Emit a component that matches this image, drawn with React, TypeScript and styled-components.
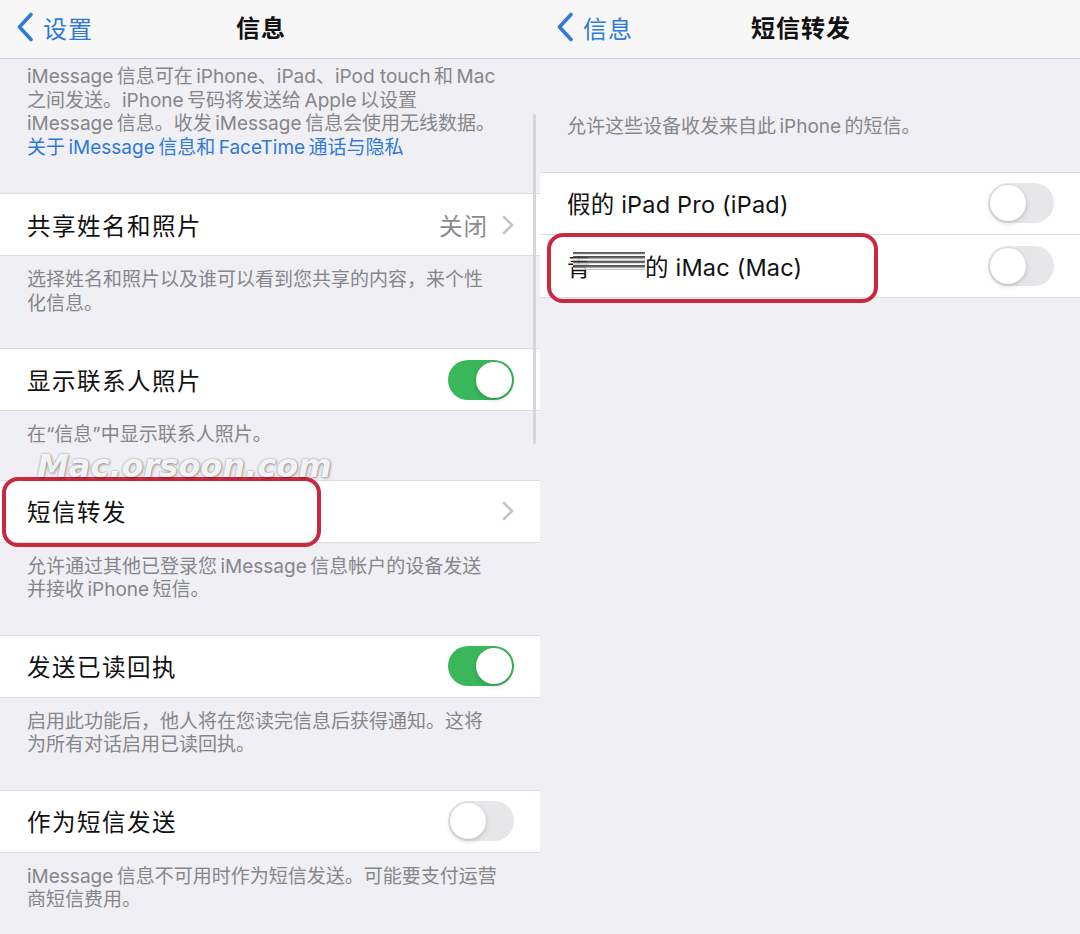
import React from "react";
import styled, { createGlobalStyle } from "styled-components";

const Global = createGlobalStyle`
  html, body { margin: 0; padding: 0; background: #efeff4; }
  body { font-family: "Inter", "Noto Sans CJK SC", "Noto Sans", sans-serif; -webkit-font-smoothing: antialiased; }
  * { box-sizing: border-box; }
`;

const Page = styled.div`
  display: grid;
  grid-template-columns: 540px 540px;
  width: 1080px;
  height: 934px;
  overflow: hidden;
  background: #efeff4;
`;

const Panel = styled.section`
  position: relative;
  display: flex;
  flex-direction: column;
  height: 934px;
  overflow: hidden;
`;

const Nav = styled.header`
  position: relative;
  height: 59px;
  flex: none;
  display: flex;
  align-items: center;
  justify-content: center;
  padding: 0 18px 5px 0;
  background: #f7f7f8;
  border-bottom: 1px solid #cfcfd3;
`;

const Back = styled.div`
  position: absolute;
  left: 16px;
  top: 0;
  height: 54px;
  display: flex;
  align-items: center;
  gap: 9px;
  color: #2f7ad8;
  font-size: 24px;
  letter-spacing: 1px;
`;

const Title = styled.h1`
  margin: 0;
  font-size: 24px;
  font-weight: 600;
  color: #111;
  letter-spacing: 1px;
`;

const Content = styled.div`
  display: flex;
  flex-direction: column;
`;

const Footer = styled.p<{ $top?: number; $bottom?: number }>`
  margin: 0;
  padding: ${(p) => p.$top ?? 12}px 20px ${(p) => p.$bottom ?? 33}px 27px;
  font-size: 19px;
  line-height: 23.5px;
  color: #86868b;
`;

const Link = styled.span`
  color: #2f7ad8;
`;

const Group = styled.div`
  background: #fff;
  border-top: 1px solid #dcdce0;
  border-bottom: 1px solid #dcdce0;
`;

const Row = styled.div<{ $sep?: boolean }>`
  position: relative;
  height: ${(p) => (p.$sep ? 63 : 61)}px;
  display: flex;
  align-items: center;
  padding: 0 26px 0 27px;
  border-top: ${(p) => (p.$sep ? "1px solid #dcdce0" : "none")};
`;

const Label = styled.span<{ $cjk?: boolean }>`
  flex: 1;
  font-size: 23.5px;
  color: #111;
  letter-spacing: ${(p) => (p.$cjk ? "1.5px" : "0.2px")};
  display: flex;
  align-items: center;
`;

const Value = styled.span`
  font-size: 23.5px;
  color: #8a8a8e;
  letter-spacing: 1px;
  margin-right: 14px;
`;

const Track = styled.div<{ $on: boolean }>`
  position: relative;
  width: 66px;
  height: 40px;
  border-radius: 20px;
  background: ${(p) => (p.$on ? "#3ab75a" : "#e7e7ea")};
`;

const Knob = styled.div<{ $on: boolean }>`
  position: absolute;
  top: 2px;
  left: ${(p) => (p.$on ? "28px" : "2px")};
  width: 36px;
  height: 36px;
  border-radius: 50%;
  background: #fff;
  box-shadow: 0 2px 5px rgba(0, 0, 0, 0.18), 0 0 0 0.5px rgba(0, 0, 0, 0.06);
`;

const Highlight = styled.div<{ $l: number; $t: number; $w: number; $h: number }>`
  position: absolute;
  left: ${(p) => p.$l}px;
  top: ${(p) => p.$t}px;
  width: ${(p) => p.$w}px;
  height: ${(p) => p.$h}px;
  border: 4px solid #c9283f;
  border-radius: 16px;
  pointer-events: none;
  z-index: 3;
`;

const Watermark = styled.div`
  position: absolute;
  left: 37px;
  top: 447px;
  font-family: "DejaVu Sans", sans-serif;
  font-weight: 700;
  font-style: italic;
  font-size: 32px;
  letter-spacing: 0;
  color: rgba(255, 255, 255, 0.92);
  text-shadow: 0 0 2px rgba(60, 60, 60, 0.5), 1px 1px 3px rgba(0, 0, 0, 0.3);
  z-index: 4;
  pointer-events: none;
`;

const Scrollbar = styled.div`
  position: absolute;
  right: 4px;
  top: 114px;
  width: 3px;
  height: 330px;
  border-radius: 2px;
  background: #d6d6da;
`;

const Masked = styled.span`
  position: relative;
  display: inline-block;
  width: 78px;
`;

const Scribble = styled.span`
  position: absolute;
  left: 6px;
  right: 0;
  top: 3px;
  height: 18px;
  background: repeating-linear-gradient(
    to bottom,
    #333 0px,
    #555 1.5px,
    #ddd 2.5px,
    #fff 3.5px,
    #777 4.5px
  );
  opacity: 0.85;
`;

const Chevron = () => (
  <svg width="12" height="20" viewBox="0 0 12 20">
    <path d="M2 2 L10 10 L2 18" fill="none" stroke="#c4c4c8" strokeWidth="2.6" strokeLinecap="round" strokeLinejoin="round" />
  </svg>
);

const BackChevron = () => (
  <svg width="18" height="30" viewBox="0 0 18 30">
    <path d="M15 2.5 L3.5 15 L15 27.5" fill="none" stroke="#2f7ad8" strokeWidth="3.6" strokeLinecap="round" strokeLinejoin="round" />
  </svg>
);

const Toggle = ({ on }: { on: boolean }) => (
  <Track $on={on}>
    <Knob $on={on} />
  </Track>
);

const t = "\u2009";

export default function App() {
  return (
    <>
      <Global />
      <Page>
        <Panel>
          <Nav>
            <Back>
              <BackChevron />
              设置
            </Back>
            <Title>信息</Title>
          </Nav>
          <Content>
            <Footer $top={6} $bottom={34}>
              {`iMessage${t}信息可在${t}iPhone、iPad、iPod touch${t}和${t}Mac`}
              <br />
              {`之间发送。iPhone${t}号码将发送给${t}Apple${t}以设置`}
              <br />
              {`iMessage${t}信息。收发${t}iMessage${t}信息会使用无线数据。`}
              <br />
              <Link>{`关于${t}iMessage${t}信息和${t}FaceTime${t}通话与隐私`}</Link>
            </Footer>
            <Group>
              <Row>
                <Label $cjk>共享姓名和照片</Label>
                <Value>关闭</Value>
                <Chevron />
              </Row>
            </Group>
            <Footer>
              选择姓名和照片以及谁可以看到您共享的内容，来个性
              <br />
              化信息。
            </Footer>
            <Group>
              <Row>
                <Label $cjk>显示联系人照片</Label>
                <Toggle on />
              </Row>
            </Group>
            <Footer>在“信息”中显示联系人照片。</Footer>
            <Group>
              <Row>
                <Label $cjk>短信转发</Label>
                <Chevron />
              </Row>
            </Group>
            <Footer>
              {`允许通过其他已登录您${t}iMessage${t}信息帐户的设备发送`}
              <br />
              {`并接收${t}iPhone${t}短信。`}
            </Footer>
            <Group>
              <Row>
                <Label $cjk>发送已读回执</Label>
                <Toggle on />
              </Row>
            </Group>
            <Footer>
              启用此功能后，他人将在您读完信息后获得通知。这将
              <br />
              为所有对话启用已读回执。
            </Footer>
            <Group>
              <Row>
                <Label $cjk>作为短信发送</Label>
                <Toggle on={false} />
              </Row>
            </Group>
            <Footer>
              {`iMessage${t}信息不可用时作为短信发送。可能要支付运营`}
              <br />
              商短信费用。
            </Footer>
          </Content>
          <Scrollbar />
          <Watermark>Mac.orsoon.com</Watermark>
          <Highlight $l={2} $t={477} $w={319} $h={70} />
        </Panel>

        <Panel>
          <Nav>
            <Back>
              <BackChevron />
              信息
            </Back>
            <Title>短信转发</Title>
          </Nav>
          <Content>
            <Footer $top={56} $bottom={33}>{`允许这些设备收发来自此${t}iPhone${t}的短信。`}</Footer>
            <Group>
              <Row>
                <Label>假的 iPad Pro (iPad)</Label>
                <Toggle on={false} />
              </Row>
              <Row $sep>
                <Label>
                  <Masked>
                    青
                    <Scribble />
                  </Masked>
                  的 iMac (Mac)
                </Label>
                <Toggle on={false} />
              </Row>
            </Group>
          </Content>
          <Highlight $l={7} $t={233} $w={331} $h={70} />
        </Panel>
      </Page>
    </>
  );
}
